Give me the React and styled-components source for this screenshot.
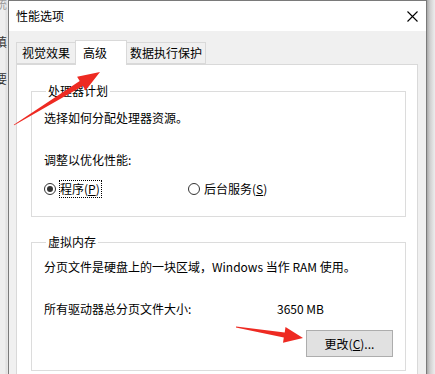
import React from 'react'
import styled, {createGlobalStyle} from 'styled-components'

const Global = createGlobalStyle`
  html, body {
    margin: 0;
    padding: 0;
    background: #f0f0f0;
  }
  body {
    font-family: "Noto Sans CJK SC", "Microsoft YaHei", sans-serif;
    font-size: 12px;
    color: #000;
  }
`

const Screen = styled.div`
  position: relative;
  width: 435px;
  height: 374px;
  overflow: hidden;
  display: flex;
`

const LeftStrip = styled.div`
  width: 8px;
  flex: none;
  overflow: hidden;
  background: linear-gradient(to right, #eeeeee 0, #eeeeee 5px, #dedede 6px, #e9e9e9 8px);
  display: flex;
  flex-direction: column;
`

const Ghost = styled.span`
  display: block;
  margin-left: -5px;
  margin-top: ${p => p.$top}px;
  line-height: 12px;
  font-size: 12px;
  color: ${p => p.$faint ? '#9a9a9a' : '#333'};
`

const RightStrip = styled.div`
  flex: 1;
  background: linear-gradient(to right, #a8a8a8 0, #cfcfcf 3px, #e2e2e2 6px, #ededed 8px);
`

const Dialog = styled.div`
  width: 419px;
  height: 420px;
  flex: none;
  box-sizing: border-box;
  border: 1px solid #7a7a7a;
  display: flex;
  flex-direction: column;
`

const TitleBar = styled.div`
  height: 30px;
  flex: none;
  background: #fff;
  display: flex;
  align-items: center;
  justify-content: space-between;
  padding: 0 8px 0 7px;
`

const Title = styled.span`
  line-height: 16px;
`

const Body = styled.div`
  flex: 1;
  background: #f0f0f0;
  padding: 9px 8px 0 7px;
  display: flex;
  flex-direction: column;
`

const TabRow = styled.div`
  height: 24px;
  display: flex;
  align-items: flex-end;
`

const Tab = styled.div`
  position: relative;
  box-sizing: border-box;
  width: ${p => p.$w}px;
  height: ${p => p.$active ? 25 : 22}px;
  margin: ${p => p.$active ? '0 -1px -1px -1px' : '0'};
  z-index: ${p => p.$active ? 1 : 0};
  background: ${p => p.$active ? '#fff' : '#f0f0f0'};
  border: 1px solid #d9d9d9;
  border-bottom: ${p => p.$active ? 'none' : '1px solid #d9d9d9'};
  display: flex;
  align-items: center;
  justify-content: ${p => p.$active ? 'flex-start' : 'center'};
  padding-left: ${p => p.$active ? 7 : 0}px;
  padding-bottom: ${p => p.$active ? 1 : 0}px;
  line-height: 16px;
`

const Panel = styled.div`
  width: 402px;
  flex: 1;
  box-sizing: border-box;
  background: #fff;
  border: 1px solid #d9d9d9;
  padding: 18px 11px 0 14px;
  display: flex;
  flex-direction: column;
`

const Group = styled.fieldset`
  margin: ${p => p.$gap}px 0 0 0;
  padding: ${p => p.$pt}px 12px ${p => p.$pb}px 12px;
  border: 1px solid #dcdcdc;
  min-width: 0;
  display: flex;
  flex-direction: column;
`

const Legend = styled.legend`
  margin-left: 2px;
  padding: 0 2px;
  line-height: 16px;
`

const Line = styled.div`
  line-height: 16px;
  margin-top: ${p => p.$mt || 0}px;
  white-space: nowrap;
`

const Key = styled.span`
  text-decoration: underline;
  text-underline-offset: 1px;
`

const RadioRow = styled.div`
  margin-top: 12px;
  display: grid;
  grid-template-columns: 144px auto;
  height: 18px;
`

const RadioItem = styled.label`
  display: flex;
  align-items: center;
  gap: 3px;
`

const RadioDot = styled.span`
  width: 12px;
  height: 12px;
  box-sizing: border-box;
  border-radius: 50%;
  border: 1px solid #333;
  display: flex;
  align-items: center;
  justify-content: center;
  &::after {
    content: '';
    width: 6px;
    height: 6px;
    border-radius: 50%;
    background: ${p => p.$on ? '#333' : 'transparent'};
  }
`

const RadioText = styled.span`
  line-height: 16px;
  padding: 0 1px 0 0;
  border: 1px dotted ${p => p.$focus ? '#000' : 'transparent'};
`

const SizeRow = styled.div`
  margin-top: 26px;
  display: grid;
  grid-template-columns: 233px auto;
  line-height: 16px;
`

const ButtonRow = styled.div`
  margin-top: 13px;
  display: flex;
  justify-content: flex-end;
`

const Button = styled.button`
  width: 87px;
  height: 27px;
  box-sizing: border-box;
  background: #e1e1e1;
  border: 1px solid #adadad;
  font: inherit;
  color: #000;
  padding: 0;
  margin: 0;
`

const Arrows = styled.svg`
  position: absolute;
  left: 0;
  top: 0;
  pointer-events: none;
`

const Close = () => (
  <svg width="11" height="11" viewBox="0 0 11 11">
    <path d="M0.5 0.5 L10.5 10.5 M10.5 0.5 L0.5 10.5" stroke="#000" strokeWidth="1.1" fill="none" />
  </svg>
)

// tapered annotation arrow, tail -> tip
const arrowPoints = (tx, ty, px, py, head, wing, neck) => {
  const dx = px - tx
  const dy = py - ty
  const len = Math.hypot(dx, dy)
  const ux = dx / len
  const uy = dy / len
  const nx = -uy
  const ny = ux
  const bx = px - ux * head
  const by = py - uy * head
  const pts = [
    [tx + nx * 0.4, ty + ny * 0.4],
    [bx + nx * neck, by + ny * neck],
    [bx + nx * wing, by + ny * wing],
    [px, py],
    [bx - nx * wing, by - ny * wing],
    [bx - nx * neck, by - ny * neck],
    [tx - nx * 0.4, ty - ny * 0.4],
  ]
  return pts.map(p => p.map(v => v.toFixed(1)).join(',')).join(' ')
}

const App = () => {
  return (
    <Screen>
      <Global />
      <LeftStrip>
        <Ghost $top={-2} $faint>统</Ghost>
        <Ghost $top={26}>填</Ghost>
        <Ghost $top={25}>要</Ghost>
      </LeftStrip>
      <Dialog>
        <TitleBar>
          <Title>性能选项</Title>
          <Close />
        </TitleBar>
        <Body>
          <TabRow>
            <Tab $w={60}>视觉效果</Tab>
            <Tab $w={52} $active>高级</Tab>
            <Tab $w={80}>数据执行保护</Tab>
          </TabRow>
          <Panel>
            <Group $gap={0} $pt={11} $pb={18}>
              <Legend>处理器计划</Legend>
              <Line>选择如何分配处理器资源。</Line>
              <Line $mt={26}>调整以优化性能:</Line>
              <RadioRow>
                <RadioItem>
                  <RadioDot $on />
                  <RadioText $focus>程序(<Key>P</Key>)</RadioText>
                </RadioItem>
                <RadioItem>
                  <RadioDot />
                  <RadioText>后台服务(<Key>S</Key>)</RadioText>
                </RadioItem>
              </RadioRow>
            </Group>
            <Group $gap={17} $pt={9} $pb={13}>
              <Legend>虚拟内存</Legend>
              <Line>分页文件是硬盘上的一块区域，Windows 当作 RAM 使用。</Line>
              <SizeRow>
                <span>所有驱动器总分页文件大小:</span>
                <span>3650 MB</span>
              </SizeRow>
              <ButtonRow>
                <Button>更改(<Key>C</Key>)...</Button>
              </ButtonRow>
            </Group>
          </Panel>
        </Body>
      </Dialog>
      <RightStrip />
      <Arrows width="435" height="374" viewBox="0 0 435 374">
        <polygon points={arrowPoints(14, 125, 100, 72, 22, 8, 3)} fill="#ee2a22" />
        <polygon points={arrowPoints(236, 327, 303, 338, 19, 8, 2.6)} fill="#ee2a22" />
      </Arrows>
    </Screen>
  )
}

export default App
